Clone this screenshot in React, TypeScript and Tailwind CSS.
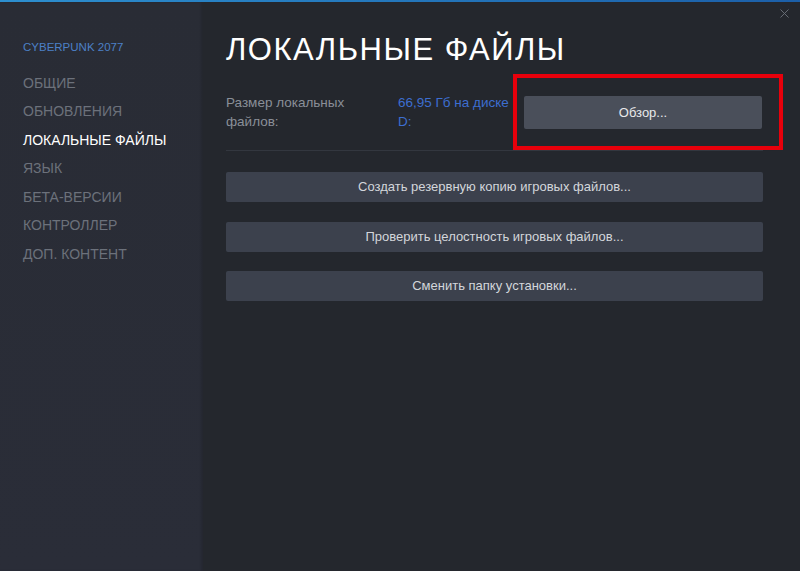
import { X } from 'lucide-react';

const menu = ['Общие', 'Обновления', 'Локальные файлы', 'Язык', 'Бета-версии', 'Контроллер', 'Доп. контент'];

const actions = [
  'Создать резервную копию игровых файлов...',
  'Проверить целостность игровых файлов...',
  'Сменить папку установки...',
];

export default function App() {
  return (
    <div
      className="w-[800px] h-[571px] flex flex-col bg-[#24272d] overflow-hidden"
      style={{ fontFamily: 'Arial, "Liberation Sans", sans-serif' }}
    >
      <div className="h-[2px] bg-gradient-to-r from-[#2d8fcf] to-[#1c5fa8]" />

      <div className="flex flex-1">
        {/* Sidebar */}
        <aside className="w-[203px] bg-gradient-to-b from-[#292c35] to-[#2a2d38] pt-[39px] pl-[23px] shadow-[inset_-2px_0_2px_rgba(0,0,0,0.12)]">
          <div className="text-[11.5px] leading-[13px] text-[#4c80c6] mb-[15px]">CYBERPUNK 2077</div>
          <ul className="flex flex-col">
            {menu.map((item) => (
              <li
                key={item}
                className={`h-[28.5px] flex items-center uppercase text-[14px] ${
                  item === 'Локальные файлы' ? 'text-white' : 'text-[#6c717b]'
                }`}
              >
                {item}
              </li>
            ))}
          </ul>
        </aside>

        {/* Main */}
        <main className="relative flex-1 pl-[23px] pr-[37px] pt-[30px]">
          <X className="absolute right-[8px] top-[4px] text-[#6b7079]" size={15} strokeWidth={1.5} />

          <h1 className="text-[31px] leading-[36px] text-white tracking-[1.5px] font-normal">
            ЛОКАЛЬНЫЕ ФАЙЛЫ
          </h1>

          <div className="relative flex items-start mt-[25px] pb-[19px] border-b border-[#33373f]">
            <div className="w-[172px] text-[13.5px] leading-[19px] text-[#8a8f98]">
              Размер локальных
              <br />
              файлов:
            </div>
            <div className="w-[122px] text-[13.5px] leading-[19px] text-[#3d6ed0]">
              66,95 Гб на диске
              <br />
              D:
            </div>
            <button className="w-[238px] h-[33px] ml-[4px] mt-[3px] rounded-[2px] bg-[#4a4f5a] text-[#e8e9eb] text-[13px]">
              Обзор...
            </button>
            <div className="absolute left-[287px] top-[-19px] w-[270px] h-[76px] border-[4px] border-[#e8000b]" />
          </div>

          <div className="flex flex-col gap-[19.5px] mt-[21px]">
            {actions.map((a) => (
              <button
                key={a}
                className="h-[30px] rounded-[2px] bg-[#3c414d] text-[#d3d6db] text-[13px]"
              >
                {a}
              </button>
            ))}
          </div>
        </main>
      </div>
    </div>
  );
}
